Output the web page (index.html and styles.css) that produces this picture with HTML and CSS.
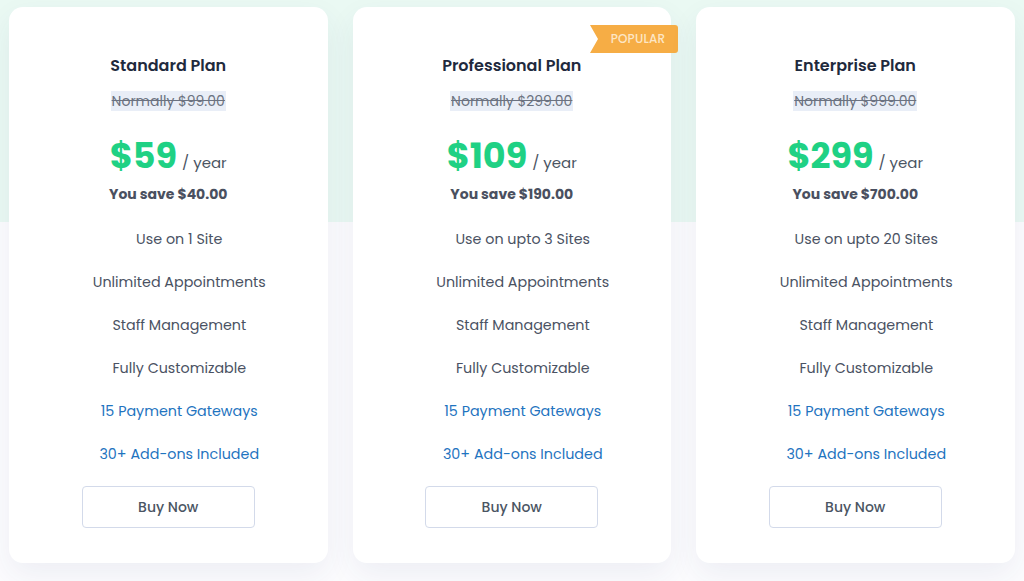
FILE: index.html
```html
<!DOCTYPE html>
<html lang="en">

    <head>
        <meta charset="UTF-8">
        <meta name="viewport"
            content="width=device-width,initial-scale=1.0">
        <title>Pricing</title>
        <link rel="stylesheet" href="styles.css">
    </head>

    <body>
        <div class="pricing">
            <div class="card">
                <h2 class="plan-name">Standard Plan</h2>
                <div class="old-price"><del>Normally $99.00</del></div>
                <div class="price"><span class="amount">$59</span><span class="period">/ year</span></div>
                <div class="save">You save $40.00</div>
                <ul class="features">
                    <li>Use on 1 Site</li>
                    <li>Unlimited Appointments</li>
                    <li>Staff Management</li>
                    <li>Fully Customizable</li>
                    <li class="link">15 Payment Gateways</li>
                    <li class="link">30+ Add-ons Included</li>
                </ul>
                <a href="#" class="buy">Buy Now</a>
            </div>
            <div class="card">
                <span class="ribbon">POPULAR</span>
                <h2 class="plan-name">Professional Plan</h2>
                <div class="old-price"><del>Normally $299.00</del></div>
                <div class="price"><span class="amount">$109</span><span class="period">/ year</span></div>
                <div class="save">You save $190.00</div>
                <ul class="features">
                    <li>Use on upto 3 Sites</li>
                    <li>Unlimited Appointments</li>
                    <li>Staff Management</li>
                    <li>Fully Customizable</li>
                    <li class="link">15 Payment Gateways</li>
                    <li class="link">30+ Add-ons Included</li>
                </ul>
                <a href="#" class="buy">Buy Now</a>
            </div>
            <div class="card">
                <h2 class="plan-name">Enterprise Plan</h2>
                <div class="old-price"><del>Normally $999.00</del></div>
                <div class="price"><span class="amount">$299</span><span class="period">/ year</span></div>
                <div class="save">You save $700.00</div>
                <ul class="features">
                    <li>Use on upto 20 Sites</li>
                    <li>Unlimited Appointments</li>
                    <li>Staff Management</li>
                    <li>Fully Customizable</li>
                    <li class="link">15 Payment Gateways</li>
                    <li class="link">30+ Add-ons Included</li>
                </ul>
                <a href="#" class="buy">Buy Now</a>
            </div>
        </div>
    </body>

</html>
```

FILE: styles.css
```css
* {
    margin: 0;
    padding: 0;
    box-sizing: border-box;
}

body {
    width: 100vw;
    height: 100vh;
    overflow: hidden;
    font-family: "Poppins", "Open Sans", "Noto Sans", sans-serif;
    background: linear-gradient(#eaf9f3 0, #eaf9f3 222px, #fcfcfe 222px);
}

.pricing {
    display: flex;
    gap: 25px;
    padding: 7px 0 0 9px;
}

.card {
    position: relative;
    width: 318.5px;
    height: 556px;
    background: #fff;
    border-radius: 14px;
    box-shadow: 0 12px 30px rgba(40, 50, 110, 0.07);
    display: flex;
    flex-direction: column;
    align-items: center;
    padding: 47px 20px 36px;
    text-align: center;
}

.card > * {
    flex-shrink: 0;
}

.plan-name {
    font-size: 16px;
    line-height: 24px;
    font-weight: 600;
    color: #1f2a3d;
}

.old-price {
    margin-top: 13px;
    font-size: 14px;
    line-height: 21px;
    color: #6b7280;
}

.old-price del {
    background: #e9eef7;
    padding: 0 1px;
}

.price {
    margin-top: 22px;
    height: 44px;
    display: flex;
    align-items: baseline;
    gap: 5px;
}

.amount {
    font-size: 35px;
    line-height: 44px;
    font-weight: 700;
    color: #1fd184;
}

.period {
    font-size: 15px;
    line-height: 20px;
    color: #4b5563;
}

.save {
    margin-top: 5px;
    font-size: 14px;
    line-height: 22px;
    font-weight: 700;
    color: #4a5060;
}

.features {
    list-style: none;
    margin-top: 23px;
    padding-left: 22px;
    display: flex;
    flex-direction: column;
    gap: 21px;
}

.features li {
    font-size: 14.3px;
    line-height: 22px;
    color: #4a5263;
}

.features li.link {
    color: #1f74c0;
}

.buy {
    margin-top: 21px;
    width: 173px;
    height: 42px;
    display: flex;
    justify-content: center;
    align-items: center;
    border: 1px solid #d3daea;
    border-radius: 4px;
    text-decoration: none;
    font-size: 14px;
    font-weight: 500;
    color: #4b5563;
}

/* ribbon sticking out of the right edge */
.ribbon {
    position: absolute;
    top: 18px;
    right: -7px;
    width: 88px;
    height: 28px;
    padding-left: 8px;
    display: flex;
    align-items: center;
    justify-content: center;
    background: #f6ad45;
    color: #fde6c4;
    font-size: 12px;
    font-weight: 500;
    letter-spacing: 0.2px;
    clip-path: polygon(0 0, 100% 0, 100% 100%, 0 100%, 8px 50%);
    border-radius: 0 3px 3px 0;
}
```
